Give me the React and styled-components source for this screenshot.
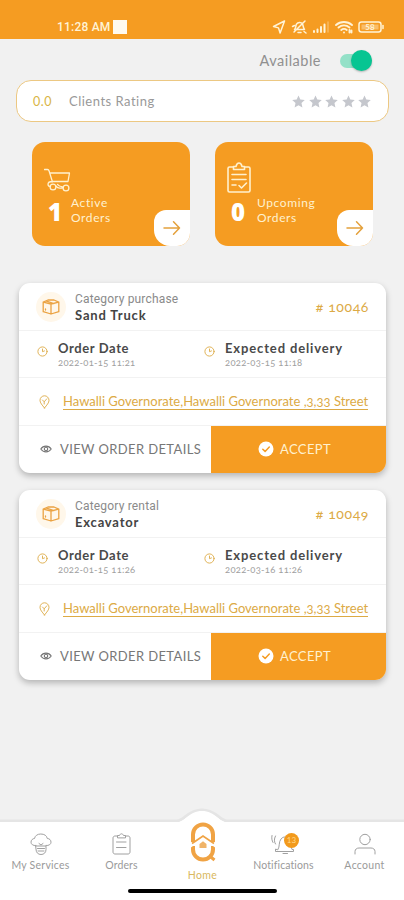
import React from "react";
import styled, { createGlobalStyle } from "styled-components";

const orange = "#f59c22";
const gold = "#dcaa45";

const GlobalStyle = createGlobalStyle`
  * { box-sizing: border-box; }
  body {
    margin: 0;
    background: #f1f1f1;
    font-family: Lato, "Open Sans", sans-serif;
    color: #888;
  }
  svg { display: block; flex-shrink: 0; }
`;

// ------------- data -----------------

const orders = [
  {
    id: "10046",
    category: "Category purchase",
    title: "Sand Truck",
    titleGap: 0.85,
    ordered: "2022-01-15 11:21",
    expected: "2022-03-15 11:18",
  },
  {
    id: "10049",
    category: "Category rental",
    title: "Excavator",
    titleGap: 0.8,
    ordered: "2022-01-15 11:26",
    expected: "2022-03-16 11:26",
  },
];

const address = "Hawalli Governorate,Hawalli Governorate ,3,33 Street";

// ------------- icons -----------------

const Icon = ({ w, h, box, sw = 1, children }) => (
  <svg
    width={w}
    height={h}
    viewBox={box || `0 0 ${w} ${h}`}
    fill="none"
    stroke="currentColor"
    strokeWidth={sw}
    strokeLinecap="round"
    strokeLinejoin="round"
  >
    {children}
  </svg>
);

const StatusIcons = () => (
  <Icon w={112} h={16} sw={1.5}>
    <path d="M12.5 2 1.5 7.5l5 1.4 1.6 5.1z" />
    <path d="M22.5 10.5c1.6-1.3 1-3.6 2-5.3 1.3-2.2 4.6-2.4 6-.2.8 1.3.5 3.5 2 5.5h-8M26 13.500h3M22 13 33 2M20.500 7.500l2-1M32 12.500l2 1.500" />
    <path d="M42 13v-1M45.500 13v-2.500M49 13V8M52.500 13V5.500" strokeWidth="2" />
    <path d="M56 13V3" strokeOpacity=".35" />
    <path d="M64 6c4.500-4 11.500-4 16 0M66.500 8.500c3.200-2.800 7.800-2.800 11 0M69.200 11c1.600-1.300 4-1.300 5.600 0M72 13.500v0M77.500 11v2.500M79.500 13.500v-2" strokeWidth="1.900" />
    <rect x="87" y="3" width="22" height="10" rx="2.500" />
    <path d="M111 6.500v3" />
    <rect x="89.500" y="5.500" width="17" height="5" fill="currentColor" fillOpacity=".4" stroke="none" />
    <text x="98" y="11" fontSize="8" fontWeight="700" textAnchor="middle" fill="currentColor" stroke="none">
      58
    </text>
  </Icon>
);

const CartIcon = () => (
  <Icon w={27} h={26} box="1.500 1.500 27 26" sw={1.3}>
    <path d="M2 3h3c1 0 1.300.6 1.600 1.500L10 15.500M8 6.500H27l-1.500 8.500H10c-2.800 0-4.500 1.200-4.500 2.800 0 1.700 1.200 2.400 2.500 2.400" />
    <circle cx="10.500" cy="20.500" r="2.900" />
    <circle cx="23.500" cy="21.500" r="2.900" />
    <path d="M13.500 19.500c1 2.500 6 2.500 7 1.500M15 18l2 1.500 3.500 1" />
  </Icon>
);

const ClipboardIcon = () => (
  <Icon w={24} h={32} sw={1.6}>
    <path d="M6 5H2.500C1.700 5 1 5.700 1 6.500v22c0 1 .7 1.500 1.500 1.500h19c.8 0 1.500-.6 1.500-1.500v-22C23 5.700 22.300 5 21.500 5H18" />
    <path d="M6.500 7.500V4.500H9C9.500 2.300 10.500 1 12 1s2.500 1.300 3 3.500h2.500v3zM5 12.500h14M5 17.500h14M5 23h4M12 23.500l2.500 2.500 5-5" />
  </Icon>
);

const ArrowIcon = () => (
  <Icon w={18} h={16} sw={1.5}>
    <path d="M1 8h15.500M10.500 1.800 16.500 8l-6 6.200" />
  </Icon>
);

const BoxIcon = () => (
  <Icon w={18} h={16} sw={1.3}>
    <path d="M1.200 3.200 9 5l7.800-1.800v9.500L9 15l-7.800-2.300zM1.200 3.200 6 1h6l4.800 2.200M9 5v10M4.500 2.200 12 4.500M3.500 10v1" />
  </Icon>
);

const ClockIcon = () => (
  <Icon w={11} h={11} sw={0.9}>
    <circle cx="5.500" cy="5.500" r="4.600" />
    <path d="M5.500 3v2.700l2-.8" />
  </Icon>
);

const PinIcon = () => (
  <Icon w={11} h={14} sw={0.9}>
    <path d="M5.500 13C3 9.800 1 7.800 1 5.300a4.500 4.500 0 0 1 9 0C10 7.800 8 9.800 5.500 13z" />
    <path d="M3.500 5 5.200 6.800 7.800 3.800M5.200 7v2" />
  </Icon>
);

const EyeIcon = () => (
  <Icon w={12} h={8} sw={1.1}>
    <path d="M.8 4C3.200.2 8.800.2 11.200 4 8.800 7.800 3.200 7.800.8 4z" />
    <circle cx="6" cy="4" r="1.700" />
  </Icon>
);

const CheckIcon = () => (
  <Icon w={16} h={16} sw={1.5}>
    <circle cx="8" cy="8" r="7.500" fill="#fff" stroke="none" />
    <path d="m4.800 8.200 2.300 2.200 4.200-4.400" stroke={orange} />
  </Icon>
);

const StarIcon = () => (
  <svg width="13" height="13" viewBox="0 0 24 24" fill="#c5c7cd">
    <path d="m12 .8 3.400 7.600 8.200.9-6.100 5.600 1.700 8.200L12 19l-7.200 4.100 1.700-8.200L.4 9.300l8.200-.9z" />
  </svg>
);

const ServicesIcon = () => (
  <Icon w={22} h={23} sw={1}>
    <path d="M6 12.500C3 13 1 11.200 1 9.200 1 7 2.700 5.600 4.500 5.500 5 2.700 7.500 1 10.800 1c3.500 0 6 1.700 6.500 4.500C19.500 5.600 21 7 21 9.200c0 2-2 3.700-5 3.300" />
    <path d="M6 13h10v3.500c0 3-2 5-5 5s-5-2-5-5zM7.500 15.500h7M8 18h6M9 10.500 11 12l2-1.500" />
  </Icon>
);

const OrdersIcon = () => (
  <Icon w={19} h={22} sw={1}>
    <path d="M5.500 3H3C2 3 1 3.700 1 5v14c0 1.200.8 2 2 2h13c1.200 0 2-.8 2-2V5c0-1.200-.8-2-2-2h-2.500M5.500 4.500v-2h2C8 1.300 8.600.8 9.500.8s1.500.5 2 1.700h2v2zM4.500 9H14M4.500 14.500H14" />
  </Icon>
);

const BellIcon = () => (
  <Icon w={28} h={22} sw={1}>
    <path d="M8 16.500c2-3 .5-7.500 3-10.500 1.200-1.500 2.500-2 4-2s3 .5 4.200 2c2.500 3 1 7 2.800 10.500h1.500v2H5.500v-2zM13 20.500h4.500M5.500 11C4 8.500 4 6 5.500 3M3 9.500C1.800 7.500 1.500 5 2 2.500" />
  </Icon>
);

const AccountIcon = () => (
  <Icon w={22} h={22} sw={1}>
    <circle cx="11" cy="6.500" r="5.200" />
    <path d="M1 21v-2.500C1 16.300 2.800 15 5 15h12c2.200 0 4 1.300 4 3.500V21" />
  </Icon>
);

const HomeLogo = () => (
  <svg width="28" height="40" viewBox="0 0 28 40" fill="none" stroke="#f0a344">
    <path d="M4 20v-7.500a10 10 0 0 1 20 0V20M4 24v3.500a10 10 0 0 0 20 0V24" strokeWidth="4" />
    <path d="m20 33.500 5.500 4.500" strokeWidth="3" />
    <path d="m1 25 13-9.500L27 25" stroke="#fff" strokeWidth="2" />
    <path d="M3 21.500 14 14l11 7.500" strokeWidth="1.700" />
    <path d="m10.500 22 3.500-2.800 3.500 2.800v4h-7z" fill="#f0b469" stroke="none" />
  </svg>
);

// ------------- components -----------------

const StatCard = (props) => (
  <StatBox>
    <StatIcon>{props.icon}</StatIcon>
    <StatRow>
      <StatCount $width={props.countWidth}>{props.count}</StatCount>
      <StatLabel>
        {props.label}
        <br />
        Orders
      </StatLabel>
    </StatRow>
    <ArrowButton>
      <ArrowIcon />
    </ArrowButton>
  </StatBox>
);

const DateCell = ({ label, value, gap }) => (
  <DateBox>
    <ClockIcon />
    <div>
      <DateLabel $gap={gap}>{label}</DateLabel>
      <DateValue>{value}</DateValue>
    </div>
  </DateBox>
);

const OrderCard = ({ order }) => (
  <Card>
    <CardHeader>
      <BoxBadge>
        <BoxIcon />
      </BoxBadge>
      <div>
        <Category>{order.category}</Category>
        <CardTitle $gap={order.titleGap}>{order.title}</CardTitle>
      </div>
      <OrderId># {order.id}</OrderId>
    </CardHeader>
    <DateRow>
      <DateCell label="Order Date" value={order.ordered} gap={0.6} />
      <DateCell label="Expected delivery" value={order.expected} gap={0.87} />
    </DateRow>
    <AddressRow>
      <PinIcon />
      <Address>{address}</Address>
    </AddressRow>
    <Actions>
      <ViewButton>
        <EyeIcon />
        VIEW ORDER DETAILS
      </ViewButton>
      <AcceptButton>
        <CheckIcon />
        ACCEPT
      </AcceptButton>
    </Actions>
  </Card>
);

const App = () => {
  return (
    <Screen>
      <GlobalStyle />
      <StatusBar>
        <Time>11:28 AM</Time>
        <TimeSquare />
        <StatusIcons />
      </StatusBar>
      <AvailableRow>
        Available
        <Track>
          <Knob />
        </Track>
      </AvailableRow>
      <RatingBar>
        <RatingValue>0.0</RatingValue>
        <span>Clients Rating</span>
        <Stars>
          {[1, 2, 3, 4, 5].map((n) => (
            <StarIcon key={n} />
          ))}
        </Stars>
      </RatingBar>
      <Stats>
        <StatCard icon={<CartIcon />} count="1" countWidth={23} label="Active" />
        <StatCard icon={<ClipboardIcon />} count="0" countWidth={26} label="Upcoming" />
      </Stats>
      <OrderList>
        {orders.map((order) => (
          <OrderCard key={order.id} order={order} />
        ))}
      </OrderList>
      <NavWrap>
        <NavShape width="404" height="95" viewBox="0 0 404 95">
          <path
            d="M-4 14H177C184 14 188 3 202 3S220 14 227 14H408V99H-4z"
            fill="#fff"
            stroke="#e5e5e5"
            strokeWidth="3"
          />
          <path d="M0 15H178C185 15 189 4 202 4S219 15 226 15H404V95H0z" fill="#fff" />
        </NavShape>
        <NavRow>
          <NavItem>
            <ServicesIcon />
            <NavLabel $gap={0.25}>My Services</NavLabel>
          </NavItem>
          <NavItem>
            <OrdersIcon />
            <NavLabel $gap={0.1}>Orders</NavLabel>
          </NavItem>
          <NavItem $active>
            <HomeLogo />
            <NavLabel $active $gap={0.35}>
              Home
            </NavLabel>
          </NavItem>
          <NavItem>
            <BellIcon />
            <NavBadge>13</NavBadge>
            <NavLabel $gap={0.1}>Notifications</NavLabel>
          </NavItem>
          <NavItem>
            <AccountIcon />
            <NavLabel $gap={0.3}>Account</NavLabel>
          </NavItem>
        </NavRow>
        <HomeIndicator />
      </NavWrap>
    </Screen>
  );
};

// ------------- styles -----------------

const Screen = styled.div`
  width: 404px;
  height: 900px;
  display: flex;
  flex-direction: column;
  background: #f1f1f1;
  overflow: hidden;
`;

const StatusBar = styled.div`
  height: 39px;
  flex-shrink: 0;
  display: flex;
  align-items: center;
  padding: 15px 20px 0 57px;
  background: ${orange};
  color: #fff3d6;

  svg {
    margin-left: auto;
  }
`;

const Time = styled.span`
  width: 56px;
  font: 500 12px Roboto, sans-serif;
  letter-spacing: 0.2px;
  white-space: nowrap;
`;

const TimeSquare = styled.span`
  width: 14px;
  height: 14px;
  background: #fffaf0;
`;

const AvailableRow = styled.div`
  height: 41px;
  flex-shrink: 0;
  display: flex;
  align-items: center;
  justify-content: flex-end;
  gap: 19px;
  padding: 2px 32px 0 0;
  font-size: 14.5px;
  letter-spacing: 0.5px;
  color: #909090;
`;

const Track = styled.div`
  width: 32px;
  height: 14px;
  display: flex;
  align-items: center;
  justify-content: flex-end;
  border-radius: 7px;
  background: #94e1c8;
`;

const Knob = styled.div`
  width: 21px;
  height: 21px;
  flex-shrink: 0;
  border-radius: 50%;
  background: #07c592;
  box-shadow: 0 1px 2px rgba(0, 0, 0, 0.25);
`;

const RatingBar = styled.div`
  height: 42px;
  flex-shrink: 0;
  display: flex;
  align-items: center;
  margin: 0 15px 0 16px;
  padding: 0 17px 0 16px;
  border: 1px solid #ecc883;
  border-radius: 15px;
  background: #fff;
  font-size: 13px;
  letter-spacing: 0.5px;
  color: #999;
`;

const RatingValue = styled.span`
  width: 36px;
  font-size: 12.5px;
  color: #d9b545;
`;

const Stars = styled.div`
  display: flex;
  gap: 3.5px;
  margin-left: auto;
`;

const Stats = styled.div`
  display: flex;
  flex-shrink: 0;
  gap: 25px;
  padding: 20px 31px 0 32px;
`;

const StatBox = styled.div`
  position: relative;
  width: 158px;
  height: 104px;
  display: flex;
  flex-direction: column;
  border-radius: 13px;
  background: ${orange};
  color: #fff1cf;
  overflow: hidden;
`;

const StatIcon = styled.div`
  height: 52px;
  display: flex;
  align-items: flex-end;
  padding-left: 12px;
`;

const StatRow = styled.div`
  display: flex;
  align-items: center;
  padding: 0 0 0 16px;
`;

const StatCount = styled.div`
  width: ${(props) => props.$width}px;
  padding-top: 4px;
  font: 800 24px/28px "Open Sans", sans-serif;
  color: #fff;
`;

const StatLabel = styled.div`
  font-size: 12px;
  line-height: 15px;
  letter-spacing: 0.6px;
`;

const ArrowButton = styled.div`
  position: absolute;
  right: 0;
  bottom: 0;
  width: 36px;
  height: 36px;
  display: flex;
  align-items: center;
  justify-content: center;
  border-radius: 12px 0 0 16px;
  background: #fff;
  color: #e4a13c;
`;

const OrderList = styled.div`
  flex: 1;
  display: flex;
  flex-direction: column;
  gap: 17px;
  padding: 37px 18px 0 19px;
`;

const Card = styled.div`
  height: 190px;
  display: flex;
  flex-direction: column;
  border-radius: 11px;
  background: #fff;
  box-shadow: 0 3px 6px rgba(0, 0, 0, 0.25);
  overflow: hidden;
`;

const CardHeader = styled.div`
  height: 48px;
  display: flex;
  align-items: center;
  padding: 0 17px;
  border-bottom: 1px solid #f2f2f2;
`;

const BoxBadge = styled.div`
  width: 30px;
  height: 30px;
  display: flex;
  align-items: center;
  justify-content: center;
  margin-right: 9px;
  border-radius: 50%;
  background: #fff7ea;
  color: #eba343;
`;

const Category = styled.div`
  padding-top: 1px;
  font: 12px/15px Roboto, sans-serif;
  letter-spacing: 0.18px;
  color: #8a8a8a;
`;

const CardTitle = styled.div`
  font-size: 13px;
  font-weight: 700;
  line-height: 16px;
  letter-spacing: ${(props) => props.$gap}px;
  color: #444;
`;

const OrderId = styled.div`
  margin-left: auto;
  font-size: 14px;
  letter-spacing: 0.6px;
  color: ${gold};
  font-variant-numeric: oldstyle-nums;
`;

const DateRow = styled.div`
  height: 47px;
  display: grid;
  grid-template-columns: 167px 1fr;
  padding-left: 18px;
  border-bottom: 1px solid #f2f2f2;
`;

const DateBox = styled.div`
  display: flex;
  align-items: center;
  gap: 10px;
  color: ${gold};

  svg {
    margin-top: -6px;
  }
`;

const DateLabel = styled.div`
  font-size: 13px;
  font-weight: 700;
  line-height: 16px;
  letter-spacing: ${(props) => props.$gap}px;
  color: #4a4a4a;
`;

const DateValue = styled.div`
  font-size: 9.5px;
  line-height: 13px;
  letter-spacing: 0.25px;
  color: #a0a0a0;
  font-variant-numeric: oldstyle-nums;
`;

const AddressRow = styled.div`
  height: 48px;
  display: flex;
  align-items: center;
  gap: 13px;
  padding-left: 20px;
  border-bottom: 1px solid #f2f2f2;
  color: ${gold};
`;

const Address = styled.span`
  border-bottom: 1px solid ${gold};
  font-size: 13px;
  line-height: 16px;
  white-space: nowrap;
  font-variant-numeric: oldstyle-nums;
`;

const Actions = styled.div`
  flex: 1;
  display: grid;
  grid-template-columns: 192px 1fr;
`;

const ViewButton = styled.div`
  display: flex;
  align-items: center;
  gap: 8px;
  padding: 0 0 1px 21px;
  font-size: 13px;
  letter-spacing: 0.38px;
  white-space: nowrap;
  color: #777;
`;

const AcceptButton = styled.div`
  display: flex;
  align-items: center;
  gap: 6px;
  padding: 0 0 1px 47px;
  background: ${orange};
  font-size: 13px;
  letter-spacing: 0.38px;
  color: #fff1cf;
`;

const NavWrap = styled.div`
  position: relative;
  height: 93px;
  flex-shrink: 0;
`;

const NavShape = styled.svg`
  position: absolute;
  left: 0;
  top: 0;
`;

const NavRow = styled.div`
  position: relative;
  height: 82px;
  display: grid;
  grid-template-columns: repeat(5, 81px);
  align-items: end;
`;

const NavItem = styled.div`
  position: relative;
  height: ${(props) => (props.$active ? 60 : 39)}px;
  margin-bottom: ${(props) => (props.$active ? 7 : 17)}px;
  display: flex;
  flex-direction: column;
  align-items: center;
  justify-content: space-between;
  color: #a0a0a0;
`;

const NavLabel = styled.div`
  font-size: 10.5px;
  line-height: 14px;
  letter-spacing: ${(props) => props.$gap || 0}px;
  color: ${(props) => (props.$active ? "#d9b860" : "#9a9a9a")};
`;

const NavBadge = styled.div`
  position: absolute;
  left: 41px;
  top: 0;
  width: 15px;
  height: 15px;
  border-radius: 50%;
  background: #f29a1c;
  color: #ffd98c;
  font-size: 8px;
  line-height: 15px;
  text-align: center;
`;

const HomeIndicator = styled.div`
  position: relative;
  width: 149px;
  height: 4px;
  margin: 0 auto;
  border-radius: 2px;
  background: #000;
`;

export default App;
